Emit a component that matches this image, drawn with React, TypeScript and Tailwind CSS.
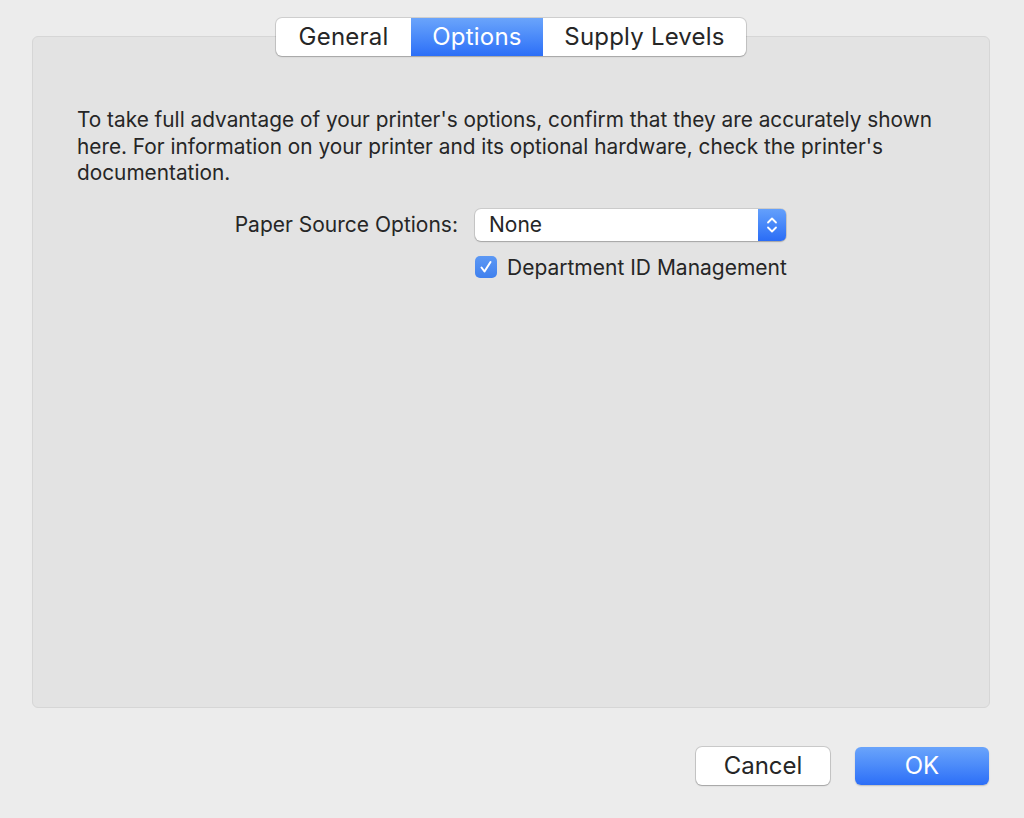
import { useState } from "react";

const font = { fontFamily: "Inter, 'Noto Sans', 'Liberation Sans', sans-serif" };

function Stepper() {
  return (
    <div className="flex h-full w-[28px] items-center justify-center rounded-r-[5px] bg-gradient-to-b from-[#64a0fb] to-[#2a6cf6]">
      <svg width="12" height="20" viewBox="0 0 12 20" fill="none">
        <path d="M2 7.5 L6 3.5 L10 7.5" stroke="white" strokeWidth="1.8" strokeLinecap="round" strokeLinejoin="round" />
        <path d="M2 12.5 L6 16.5 L10 12.5" stroke="white" strokeWidth="1.8" strokeLinecap="round" strokeLinejoin="round" />
      </svg>
    </div>
  );
}

export default function App() {
  const [tab, setTab] = useState("Options");
  const [checked, setChecked] = useState(true);
  const tabs = [
    { name: "General", w: "w-[135px]" },
    { name: "Options", w: "w-[132px]" },
    { name: "Supply Levels", w: "w-[203px]" },
  ];

  return (
    <div
      className="flex h-[818px] w-[1024px] flex-col bg-[#ececec] pl-[32px] pr-[34px] pt-[18px] text-[#262626] antialiased"
      style={font}
    >
      {/* Tabs */}
      <div className="relative z-10 flex justify-center">
        <div className="flex h-[38px] overflow-hidden rounded-[6px] bg-white shadow-[0_0_0_1px_rgba(0,0,0,0.12),0_1px_1.5px_rgba(0,0,0,0.18)]">
          {tabs.map((t) => (
            <button
              key={t.name}
              type="button"
              onClick={() => setTab(t.name)}
              className={`${t.w} text-[24px] leading-none tracking-[0.2px] ${
                tab === t.name
                  ? "bg-gradient-to-b from-[#6aa4fb] to-[#2c6ef7] text-white"
                  : "text-[#262626]"
              }`}
            >
              {t.name}
            </button>
          ))}
        </div>
      </div>

      {/* Panel */}
      <div className="-mt-[20px] h-[672px] rounded-[6px] border border-[#d6d6d6] bg-[#e3e3e3] px-[44px] pt-[70px]">
        <p className="text-[20.8px] leading-[26.5px]">
          To take full advantage of your printer's options, confirm that they are accurately shown
          here. For information on your printer and its optional hardware, check the printer's
          documentation.
        </p>

        <div className="mt-[22px] flex items-center gap-[17px]">
          <div className="w-[381px] text-right text-[21px]">Paper Source Options:</div>
          <div className="flex h-[32px] w-[311px] items-center rounded-[6px] bg-white shadow-[0_0_0_1px_rgba(0,0,0,0.1),0_1px_1.5px_rgba(0,0,0,0.2)]">
            <span className="flex-1 pl-[14px] text-[21px]">None</span>
            <Stepper />
          </div>
        </div>

        <div className="mt-[11px] flex items-center pl-[398px]">
          <button
            type="button"
            onClick={() => setChecked(!checked)}
            className={`flex h-[22px] w-[22px] items-center justify-center rounded-[5px] ${
              checked
                ? "bg-gradient-to-b from-[#5c98f4] to-[#3f80ee]"
                : "bg-white shadow-[0_0_0_1px_rgba(0,0,0,0.2)]"
            }`}
          >
            {checked && (
              <svg width="16" height="16" viewBox="0 0 16 16" fill="none">
                <path d="M3.5 8.5 L6.5 12.5 L12.5 3" stroke="white" strokeWidth="2" strokeLinecap="round" strokeLinejoin="round" />
              </svg>
            )}
          </button>
          <span className="ml-[10px] text-[21px]">Department ID Management</span>
        </div>
      </div>

      {/* Buttons */}
      <div className="mt-[39px] flex justify-end gap-[25px] pr-[1px]">
        <button
          type="button"
          className="h-[38px] w-[134px] rounded-[6px] bg-white text-[24px] shadow-[0_0_0_1px_rgba(0,0,0,0.14),0_1px_1.5px_rgba(0,0,0,0.2)]"
        >
          Cancel
        </button>
        <button
          type="button"
          className="h-[38px] w-[134px] rounded-[6px] bg-gradient-to-b from-[#6aa4fb] to-[#2c6ef7] text-[24px] text-white shadow-[0_1px_1.5px_rgba(0,0,0,0.2)]"
        >
          OK
        </button>
      </div>
    </div>
  );
}
